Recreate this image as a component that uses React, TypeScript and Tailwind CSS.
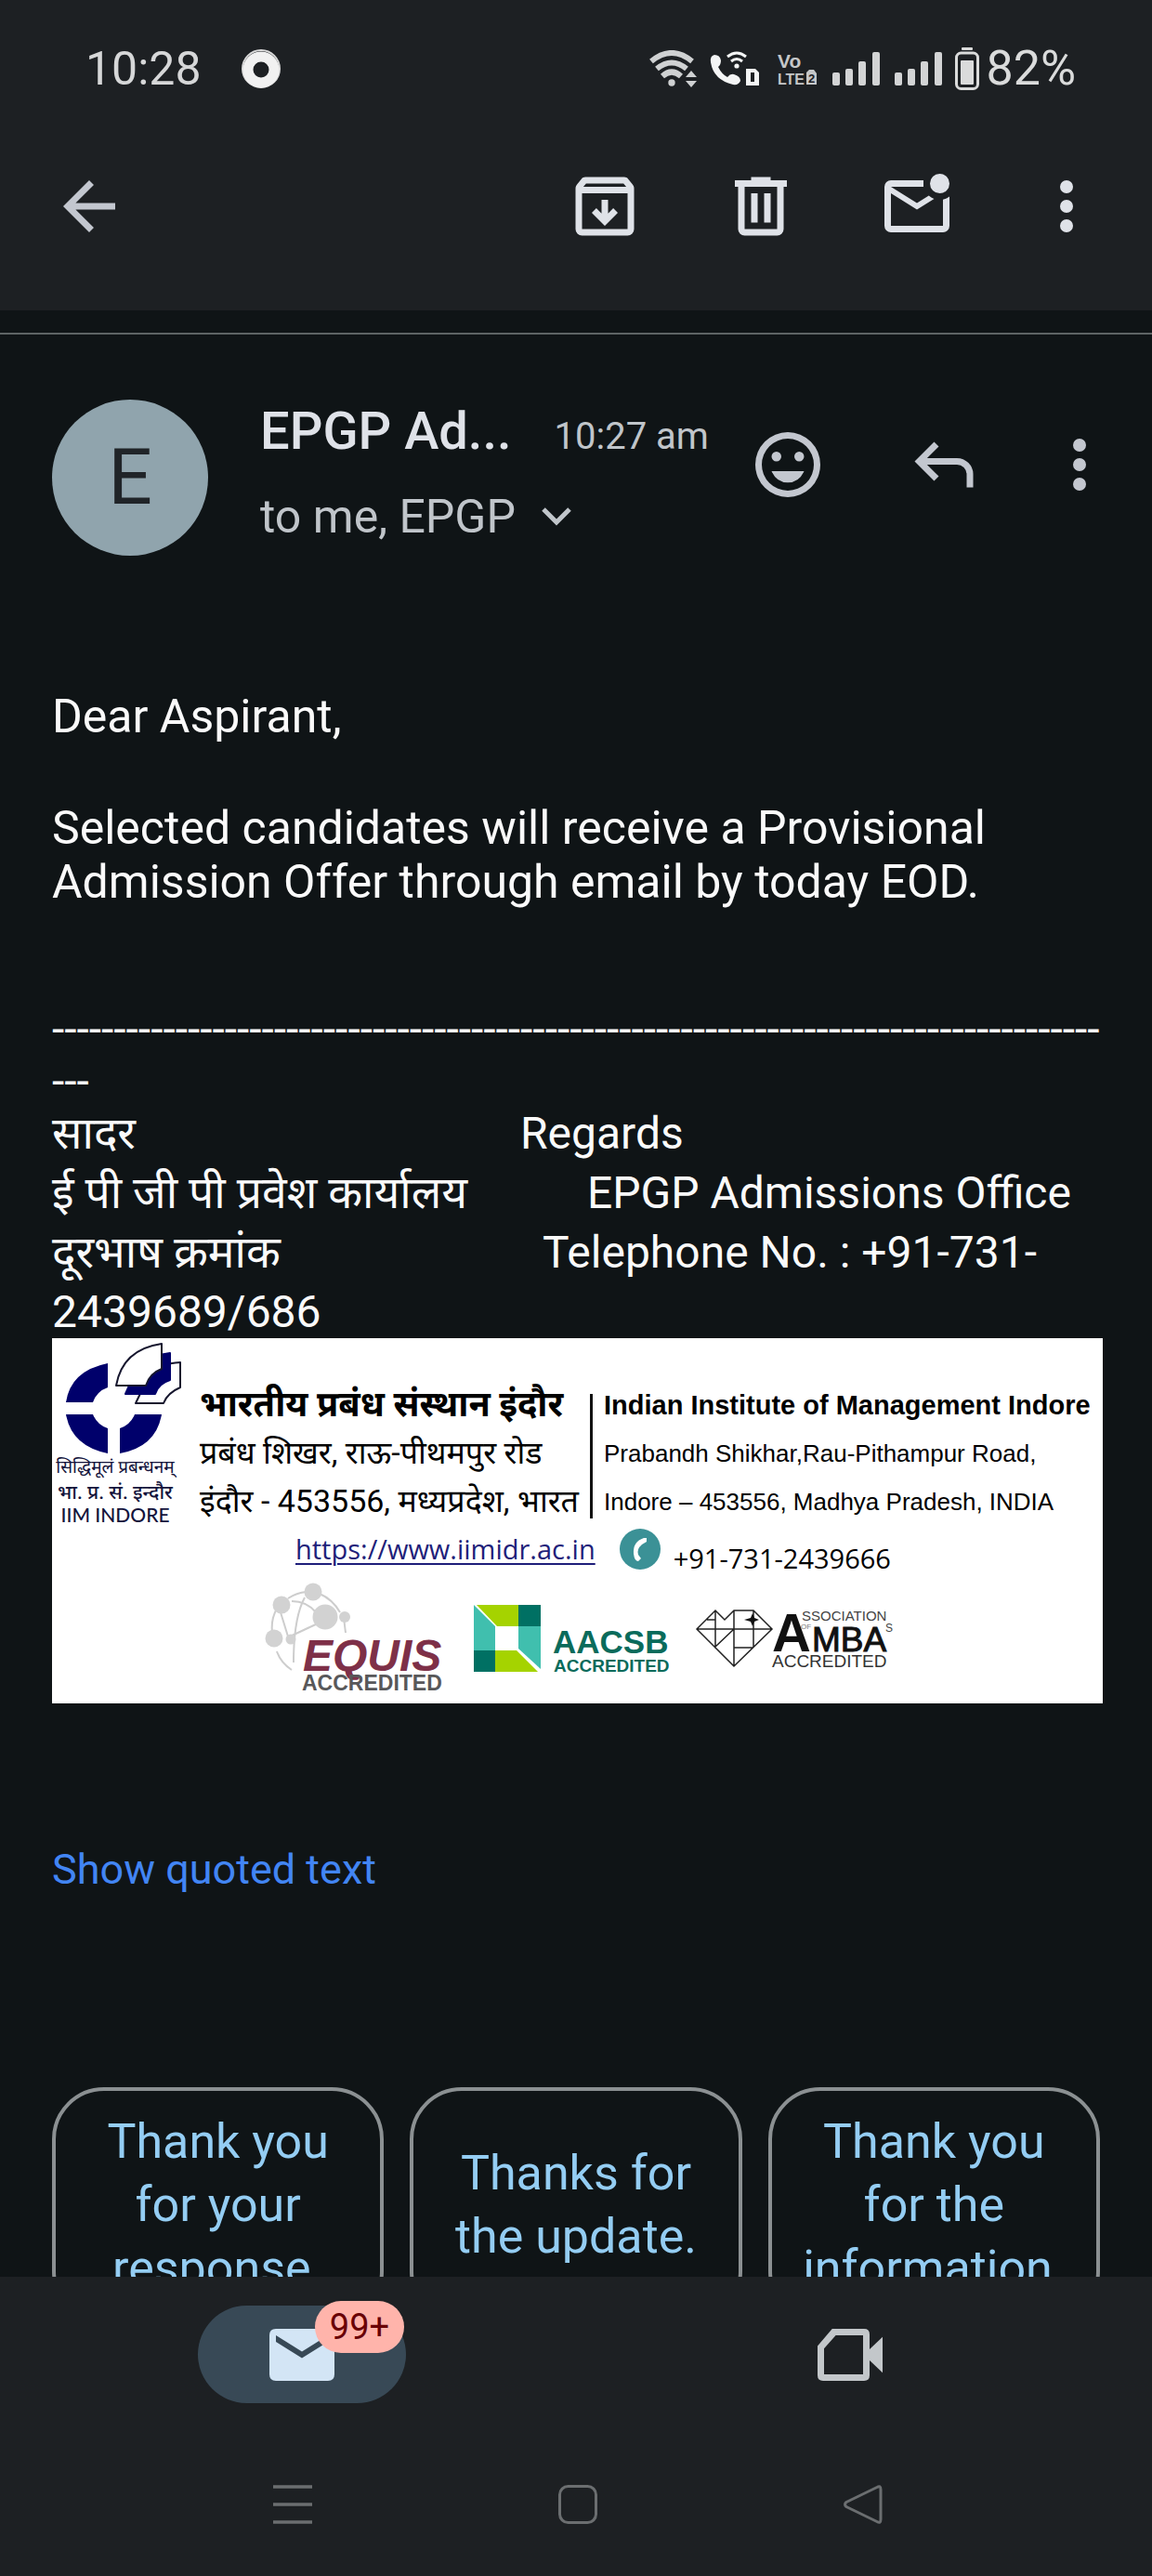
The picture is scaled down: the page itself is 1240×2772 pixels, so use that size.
import type { ReactNode } from "react";

const HINDI = "font-[Roboto,'Noto_Sans_Devanagari','Lohit_Devanagari',FreeSans,sans-serif]";

function Glyph({ d, className = "h-[84px] w-[84px]" }: { d: string; className?: string }) {
  return (
    <svg viewBox="0 0 24 24" className={`shrink-0 ${className}`} fill="currentColor" fillRule="evenodd" aria-hidden="true">
      <path d={d} />
    </svg>
  );
}

function IconButton({ label, children }: { label: string; children: ReactNode }) {
  return (
    <button type="button" aria-label={label} className="shrink-0">
      {children}
    </button>
  );
}

const ICONS = {
  back: "M7.825 13l5.6 5.6L12 20l-8-8 8-8 1.425 1.4-5.6 5.6H20v2z",
  archive:
    "M5 21q-.825 0-1.413-.587Q3 19.825 3 19V6.5q0-.375.125-.675.125-.3.325-.575l1.4-1.7q.2-.275.5-.413.3-.137.65-.137h12q.35 0 .65.137.3.138.5.413l1.4 1.7q.2.275.325.575.125.3.125.675V19q0 .825-.587 1.413Q19.825 21 19 21Zm.4-15h13.2l-.85-1H6.25ZM5 19h14V8H5v11Zm7-1 4-4-1.4-1.4-1.6 1.6V10h-2v4.2l-1.6-1.6L8 14Z",
  trash:
    "M7 21q-.825 0-1.413-.587Q5 19.825 5 19V6H4V4h5V3h6v1h5v2h-1v13q0 .825-.587 1.413Q17.825 21 17 21ZM17 6H7v13h10ZM9 17h2V8H9Zm4 0h2V8h-2Z",
  unread:
    "M4 20q-.825 0-1.412-.587Q2 18.825 2 18V6q0-.825.588-1.412Q3.175 4 4 4h10v2H4l8 5 3.65-2.275q.35.325.763.563.412.237.862.412L12 13 4 8v10h16V9.9q.575-.125 1.075-.35.5-.225.925-.55v9q0 .825-.587 1.413Q20.825 20 20 20ZM19 8q-1.25 0-2.125-.875T16 5q0-1.25.875-2.125T19 2q1.25 0 2.125.875T22 5q0 1.25-.875 2.125T19 8Z",
  more: "M12 20a2 2 0 1 1 0-4 2 2 0 0 1 0 4Zm0-6a2 2 0 1 1 0-4 2 2 0 0 1 0 4Zm0-6a2 2 0 1 1 0-4 2 2 0 0 1 0 4Z",
  smile:
    "M12 2a10 10 0 1 1 0 20a10 10 0 0 1 0-20Zm0 2a8 8 0 1 0 0 16a8 8 0 0 0 0-16ZM8.5 8a1.5 1.5 0 1 1 0 3a1.5 1.5 0 0 1 0-3Zm7 0a1.5 1.5 0 1 1 0 3a1.5 1.5 0 0 1 0-3ZM7 14h10q-1.5 3.5-5 3.5T7 14Z",
  reply:
    "M19 19v-4q0-1.25-.875-2.125T16 12H6.825l3.6 3.6L9 17l-6-6 6-6 1.425 1.4-3.6 3.6H16q2.075 0 3.538 1.462Q21 12.925 21 15v4z",
  mail: "M4 4h16q2 0 2 2v12q0 2-2 2H4q-2 0-2-2V6q0-2 2-2Zm0 2v2l8 5 8-5V6l-8 5Z",
  video:
    "M6.5 4H16.3Q18 4 18 5.700V10.300L22 6.500V17.500L18 13.700V18.300Q18 20 16.300 20H3.700Q2 20 2 18.300V9.300ZM7.600 6L4 10.100V18H16V6Z",
};

function SignalBars({ className }: { className: string }) {
  return (
    <svg viewBox="0 0 51 36" className={`h-9 w-[51px] ${className}`} fill="#d3d4d5" aria-label="Signal">
      <rect x="0" y="22" width="8" height="14" rx="2" />
      <rect x="14" y="18" width="8" height="18" rx="2" />
      <rect x="28" y="10" width="8" height="26" rx="2" />
      <rect x="43" y="0" width="8" height="36" rx="2" />
    </svg>
  );
}

function StatusBar() {
  return (
    <div className="flex h-[148px] items-center justify-between pr-[82px] pl-[92px] leading-none text-[#d6d7d8]">
      <div className="flex items-center gap-[43px]">
        <time className="text-[50px]">10:28</time>
        <svg viewBox="0 0 42 42" className="h-[42px] w-[42px]" aria-hidden="true">
          <circle cx="21" cy="21" r="20" fill="none" stroke="#d9d9d9" strokeWidth="2" />
          <circle cx="21" cy="22" r="14" fill="none" stroke="#f1f1f1" strokeWidth="11" />
        </svg>
      </div>
      <div className="flex items-center">
        <svg viewBox="0 0 52 40" className="h-10 w-[52px]" fill="none" stroke="#cfd1d2" strokeWidth="6" aria-label="Wi-Fi">
          <path d="M2 12Q24 -6 46 12" />
          <path d="M8 20Q24 7 40 20" />
          <path d="M14 28Q24 19 34 28" />
          <circle cx="24" cy="35" r="3.700" fill="#cfd1d2" stroke="none" />
          <path d="M39 29l6-7 6 7zM39 33l6 7 6-7z" fill="#cfd1d2" stroke="none" />
        </svg>
        <svg viewBox="0 0 53 38" className="ml-[13px] h-[38px] w-[53px]" fill="#f4f5f5" aria-label="Wi-Fi calling">
          <path d="M1 12Q0 5 5 4Q11 4 12 10Q12 15 9 17Q13 25 19 28Q22 24 26 25Q33 27 33 32Q31 37 25 36Q4 31 1 12Z" />
          <g fill="none" stroke="#f4f5f5" strokeWidth="3">
            <path d="M19 6Q29 -2 39 6" />
            <path d="M23 11Q29 6 35 11" />
          </g>
          <circle cx="29" cy="16" r="2.600" />
          <path d="M39 19h10l4 4v14H39ZM44 23v10h4v-10Z" fillRule="evenodd" />
        </svg>
        <svg viewBox="0 0 42 38" className="ml-5 h-[38px] w-[42px] overflow-visible" fill="#c5c7c8" fontFamily="Liberation Sans, sans-serif" fontWeight="700" aria-label="VoLTE 2">
          <text x="0" y="18" fontSize="21">Vo</text>
          <text x="0" y="36" fontSize="16">LTE</text>
          <path d="M34 20h5l3 4v12H31V23Z" />
          <text x="33" y="34" fontSize="13" fill="#1d2023">2</text>
        </svg>
        <SignalBars className="ml-[17px]" />
        <SignalBars className="ml-4" />
        <svg viewBox="0 0 26 46" className="ml-[14px] h-[46px] w-[26px]" aria-label="Battery">
          <rect x="7" y="0" width="12" height="3" rx="1" fill="#dadbdb" />
          <rect x="1.500" y="6" width="23" height="38.500" rx="5" fill="none" stroke="#dadbdb" strokeWidth="3" />
          <rect x="6" y="14" width="14" height="26" rx="1" fill="#dadbdb" />
        </svg>
        <span className="ml-[7px] text-[52px] text-[#dadbdb]">82%</span>
      </div>
    </div>
  );
}

function Toolbar() {
  return (
    <div className="flex items-center justify-between pt-8 pr-[50px] pb-[70px] pl-[54px] text-[#dfe2e8]">
      <IconButton label="Back">
        <span className="text-[#c3c7cf]">
          <Glyph d={ICONS.back} />
        </span>
      </IconButton>
      <div className="flex items-center gap-[77px]">
        <div className="flex items-center gap-[84px]">
          <IconButton label="Archive"><Glyph d={ICONS.archive} /></IconButton>
          <IconButton label="Delete"><Glyph d={ICONS.trash} /></IconButton>
          <IconButton label="Mark as unread"><Glyph d={ICONS.unread} /></IconButton>
        </div>
        <IconButton label="More options"><Glyph d={ICONS.more} /></IconButton>
      </div>
    </div>
  );
}

function SenderRow() {
  return (
    <div className="mt-[70px] flex items-start pr-9 pl-14">
      <div className="flex h-[168px] w-[168px] shrink-0 items-center justify-center rounded-full bg-[#90a4ad] text-[84px] leading-none text-[#202428]">
        E
      </div>
      <div className="ml-14 flex min-w-0 flex-1 flex-col gap-[26px] pt-0.5">
        <div className="flex items-baseline gap-[46px]">
          <h1 className="text-[56px] leading-[64px] font-medium whitespace-nowrap text-[#dfe2e8]">EPGP Ad...</h1>
          <time className="text-[40px] whitespace-nowrap text-[#c0c5ca]">10:27 am</time>
        </div>
        <button type="button" className="flex items-center gap-7 self-start text-[50px] leading-[60px] text-[#c0c5ca]">
          to me, EPGP
          <svg viewBox="0 0 32 20" className="h-5 w-8" fill="none" stroke="currentColor" strokeWidth="5" aria-hidden="true">
            <path d="M2 2l14 14L30 2" />
          </svg>
        </button>
      </div>
      <div className="flex shrink-0 items-center pt-7 text-[#c3c7cf]">
        <IconButton label="Add reaction"><Glyph d={ICONS.smile} /></IconButton>
        <span className="ml-[84px] flex"><IconButton label="Reply"><Glyph d={ICONS.reply} /></IconButton></span>
        <span className="ml-[62px] flex"><IconButton label="Message options"><Glyph d={ICONS.more} /></IconButton></span>
      </div>
    </div>
  );
}

function IimLogo() {
  return (
    <div className="flex w-[124px] shrink-0 flex-col items-center text-[#14143c]">
      <svg viewBox="0 0 124 120" className="h-[120px] w-[124px] overflow-visible" aria-label="IIM Indore">
        <g fill="#00006b">
          <path d="M54 22V48A26 26 0 0 0 38 64H9Q14 30 54 22Z" />
          <path d="M9 77H38A26 26 0 0 0 54 92V119Q15 111 9 77Z" />
          <path d="M67 119V92A26 26 0 0 0 83 77H112Q106 112 67 119Z" />
        </g>
        <g strokeWidth="2" strokeLinejoin="round">
          <path d="M84 65H114Q118 54 132 48V21Q110 22 98 36Z" fill="#fff" stroke="#16162e" />
          <path d="M73 55H105Q108 44 121 40V11Q100 13 86 26Z" fill="#00006b" stroke="#00006b" />
          <path d="M63 46Q70 7 112 1V28Q99 33 95 46Z" fill="#fff" stroke="#16162e" />
        </g>
      </svg>
      <p className={`${HINDI} text-[19px] leading-[28px] whitespace-nowrap`}>सिद्धिमूलं प्रबन्धनम्</p>
      <p className={`${HINDI} text-[21px] leading-[26px] font-medium whitespace-nowrap`}>भा. प्र. सं. इन्दौर</p>
      <p className="font-[Lato,sans-serif] text-[21px] leading-[22px] font-medium whitespace-nowrap">IIM INDORE</p>
    </div>
  );
}

function EquisLogo() {
  return (
    <svg viewBox="0 0 192 120" className="h-[120px] w-48 overflow-visible" fontFamily="Liberation Sans, sans-serif" fontWeight="700" aria-label="EQUIS accredited">
      <g fill="none" stroke="#cdcdcd" strokeWidth="2">
        <path d="M26 19Q35 13 46 12M60 14Q74 20 82 34M10 62Q6 44 14 30M14 76Q18 88 30 96M30 22Q46 22 56 34M18 34L26 60M44 18Q32 40 32 88M28 60L58 46M86 40L88 56" />
      </g>
      <g fill="#d2d2d2">
        <circle cx="53" cy="12" r="9.500" />
        <circle cx="19" cy="26" r="9.500" />
        <circle cx="66" cy="39" r="13.500" />
        <circle cx="87" cy="39" r="6" />
        <circle cx="11" cy="62" r="9.500" />
        <circle cx="29" cy="63" r="5.500" />
      </g>
      <text x="42" y="97" fontSize="48" fontStyle="italic" fill="#7e3048">EQUIS</text>
      <text x="41" y="118" fontSize="23" fill="#58585a">ACCREDITED</text>
    </svg>
  );
}

function AacsbLogo() {
  return (
    <svg viewBox="0 0 214 72" className="h-[72px] w-[214px] overflow-visible" fontFamily="Liberation Sans, sans-serif" fontWeight="700" fill="#0a6b5b" aria-label="AACSB accredited">
      <path d="M0 0L23 23V49H0Z" fill="#40bfae" />
      <path d="M3 0H48V23H25Z" fill="#a5d300" />
      <path d="M48 0H72V23H48Z" fill="#007063" />
      <path d="M48 23H72V69L48 47Z" fill="#40bfae" />
      <path d="M0 49H23V72H0Z" fill="#007063" />
      <path d="M23 49H46L69 72H23Z" fill="#a5d300" />
      <text x="85" y="52" fontSize="35">AACSB</text>
      <text x="86" y="72" fontSize="19">ACCREDITED</text>
    </svg>
  );
}

function AmbaLogo() {
  return (
    <svg viewBox="0 0 214 64" className="h-16 w-[214px] overflow-visible" fontFamily="Liberation Sans, sans-serif" fill="#111" aria-label="Association of MBAs accredited">
      <g fill="none" stroke="#222" strokeWidth="1.500">
        <path d="M1 21L21 1L31 11L41 1H62L82 21L41 61ZM1 21H82M21 1V40L41 21M41 1V61M12 11H21M62 1V41M41 41H62" />
      </g>
      <path d="M61 4L63 9L68 11L63 13L61 18L59 13L52 11L59 9Z" />
      <text x="82" y="45" fontSize="58" fontWeight="700">A</text>
      <text x="125" y="45" fontSize="37" stroke="#111" strokeWidth="1">MBA</text>
      <text x="114" y="12" fontSize="15" fill="#444">SSOCIATION</text>
      <text x="113" y="21" fontSize="8" fill="#777">OF</text>
      <text x="204" y="24" fontSize="12" fill="#444">S</text>
      <text x="82" y="62" fontSize="19" fill="#333">ACCREDITED</text>
    </svg>
  );
}

function SignatureBanner() {
  return (
    <div className="-mt-1 bg-white pb-[12px] text-black">
      <div className="flex pt-[5px]">
        <div className="ml-[6px]">
          <IimLogo />
        </div>
        <div className={`${HINDI} ml-[29px] w-[420px] shrink-0 pt-10 whitespace-nowrap`}>
          <p className="text-[38px] leading-[52px] font-bold">भारतीय प्रबंध संस्थान इंदौर</p>
          <p className="text-[34px] leading-[52px]">प्रबंध शिखर, राऊ-पीथमपुर रोड</p>
          <p className="text-[34px] leading-[52px]">इंदौर - 453556, मध्यप्रदेश, भारत</p>
        </div>
        <div className="-mb-2 mt-[55px] h-[134px] border-l-[3px] border-[#111] pl-3 font-['Liberation_Sans',sans-serif] whitespace-nowrap">
          <p className="-mt-[14px] text-[29px] leading-[52px] font-bold">Indian Institute of Management Indore</p>
          <p className="text-[26px] leading-[52px]">Prabandh Shikhar,Rau-Pithampur Road,</p>
          <p className="text-[26px] leading-[52px]">Indore – 453556, Madhya Pradesh, INDIA</p>
        </div>
      </div>
      <div className="mt-1 flex h-11 items-center pl-[262px] font-['Open_Sans',sans-serif]">
        <a href="https://www.iimidr.ac.in" className="text-[29px] leading-9 text-[#1f1f7a] underline decoration-2 underline-offset-4">
          https://www.iimidr.ac.in
        </a>
        <svg viewBox="0 0 44 44" className="ml-[26px] h-11 w-11" aria-hidden="true">
          <circle cx="22" cy="22" r="22" fill="#3b9196" />
          <path d="M26 10Q14 14 15 27Q16 35 20 35L23 32L20 28Q18 22 24 17L29 14L29 10Z" fill="#fff" />
        </svg>
        <span className="ml-[14px] pt-5 text-[29px] leading-7">+91-731-2439666</span>
      </div>
      <div className="flex items-start pt-3 pl-[228px]">
        <EquisLogo />
        <div className="mt-[26px] ml-[34px]"><AacsbLogo /></div>
        <div className="mt-[31px] ml-[25px]"><AmbaLogo /></div>
      </div>
    </div>
  );
}

const replies = ["Thank you for your response.", "Thanks for the update.", "Thank you for the information."];

function Message() {
  return (
    <article className="mt-36 pr-[53px] pl-14 text-[50px] leading-[58px] text-[#fafafa]">
      <p>Dear Aspirant,</p>
      <p className="mt-[62px]">Selected candidates will receive a Provisional Admission Offer through email by today EOD.</p>
      <div className={`${HINDI} mt-[102px] text-[48px]`}>
        <p className="leading-[56px] break-all">{"-".repeat(88)}</p>
        <div className="-mt-1 leading-[64px]">
          <p><span className="inline-block w-[504px]">सादर</span>Regards</p>
          <p className="whitespace-nowrap"><span className="inline-block w-[576px]">ई पी जी पी प्रवेश कार्यालय</span>EPGP Admissions Office</p>
          <p><span className="inline-block w-[528px]">दूरभाष क्रमांक</span>Telephone No. : +91-731-2439689/686</p>
        </div>
      </div>
      <SignatureBanner />
    </article>
  );
}

function BottomBar() {
  return (
    <footer className="shrink-0 bg-[#1d2023]">
      <nav className="grid grid-cols-2 px-[30px] pt-[31px]">
        <div className="flex justify-center">
          <button type="button" aria-label="Mail, 99+ unread" className="relative flex h-[105px] w-56 items-center justify-center rounded-full bg-[#384956] text-[#d3e5f5]">
            <Glyph d={ICONS.mail} />
            <span className="absolute -top-[5px] right-0.5 flex h-14 w-24 items-center justify-center rounded-full bg-[#ffb4ab] text-[38px] leading-none text-[#690005]">
              99+
            </span>
          </button>
        </div>
        <div className="flex items-center justify-center text-[#c3c7ca]">
          <IconButton label="Meet"><Glyph d={ICONS.video} /></IconButton>
        </div>
      </nav>
      <nav className="mt-[88px] grid grid-cols-3 pr-[158px] pb-14 pl-[162px] text-[#6b6e70]">
        <button type="button" aria-label="Recent apps" className="flex justify-center">
          <svg viewBox="0 0 42 42" className="h-[42px] w-[42px]" fill="none" stroke="currentColor" strokeWidth="3.500"><path d="M0 2H42M0 21H42M0 40H42" /></svg>
        </button>
        <button type="button" aria-label="Home" className="flex justify-center">
          <svg viewBox="0 0 42 42" className="h-[42px] w-[42px]" fill="none" stroke="currentColor" strokeWidth="3"><rect x="1.500" y="1.500" width="39" height="39" rx="9" /></svg>
        </button>
        <button type="button" aria-label="Back" className="flex justify-center">
          <svg viewBox="0 0 42 42" className="h-[42px] w-[42px]" fill="none" stroke="currentColor" strokeWidth="3" strokeLinejoin="round"><path d="M36 2.500Q40 0 40 5V37Q40 42 36 39.500L3 23.500Q0 21 3 18.500Z" /></svg>
        </button>
      </nav>
    </footer>
  );
}

export default function App() {
  return (
    <div className="flex h-screen flex-col bg-[#0f1416] font-[Roboto,sans-serif]">
      <header className="shrink-0 bg-[#1d2023]">
        <StatusBar />
        <Toolbar />
      </header>
      <main className="min-h-0 flex-1 overflow-hidden">
        <div className="mt-6 border-t-2 border-[#5e6465]" />
        <SenderRow />
        <Message />
        <button type="button" className="mt-[153px] ml-14 block text-[45px] leading-[52px] text-[#4285f4]">Show quoted text</button>
        <div className="mt-[208px] grid grid-cols-3 gap-7 px-14">
          {replies.map((text) => (
            <button
              key={text}
              type="button"
              className="flex min-h-[254px] items-center justify-center rounded-[56px] border-4 border-[#8b9092] px-8 py-[21px] text-center text-[52px] leading-[68px] text-[#94cdf3]"
            >
              {text}
            </button>
          ))}
        </div>
      </main>
      <BottomBar />
    </div>
  );
}
